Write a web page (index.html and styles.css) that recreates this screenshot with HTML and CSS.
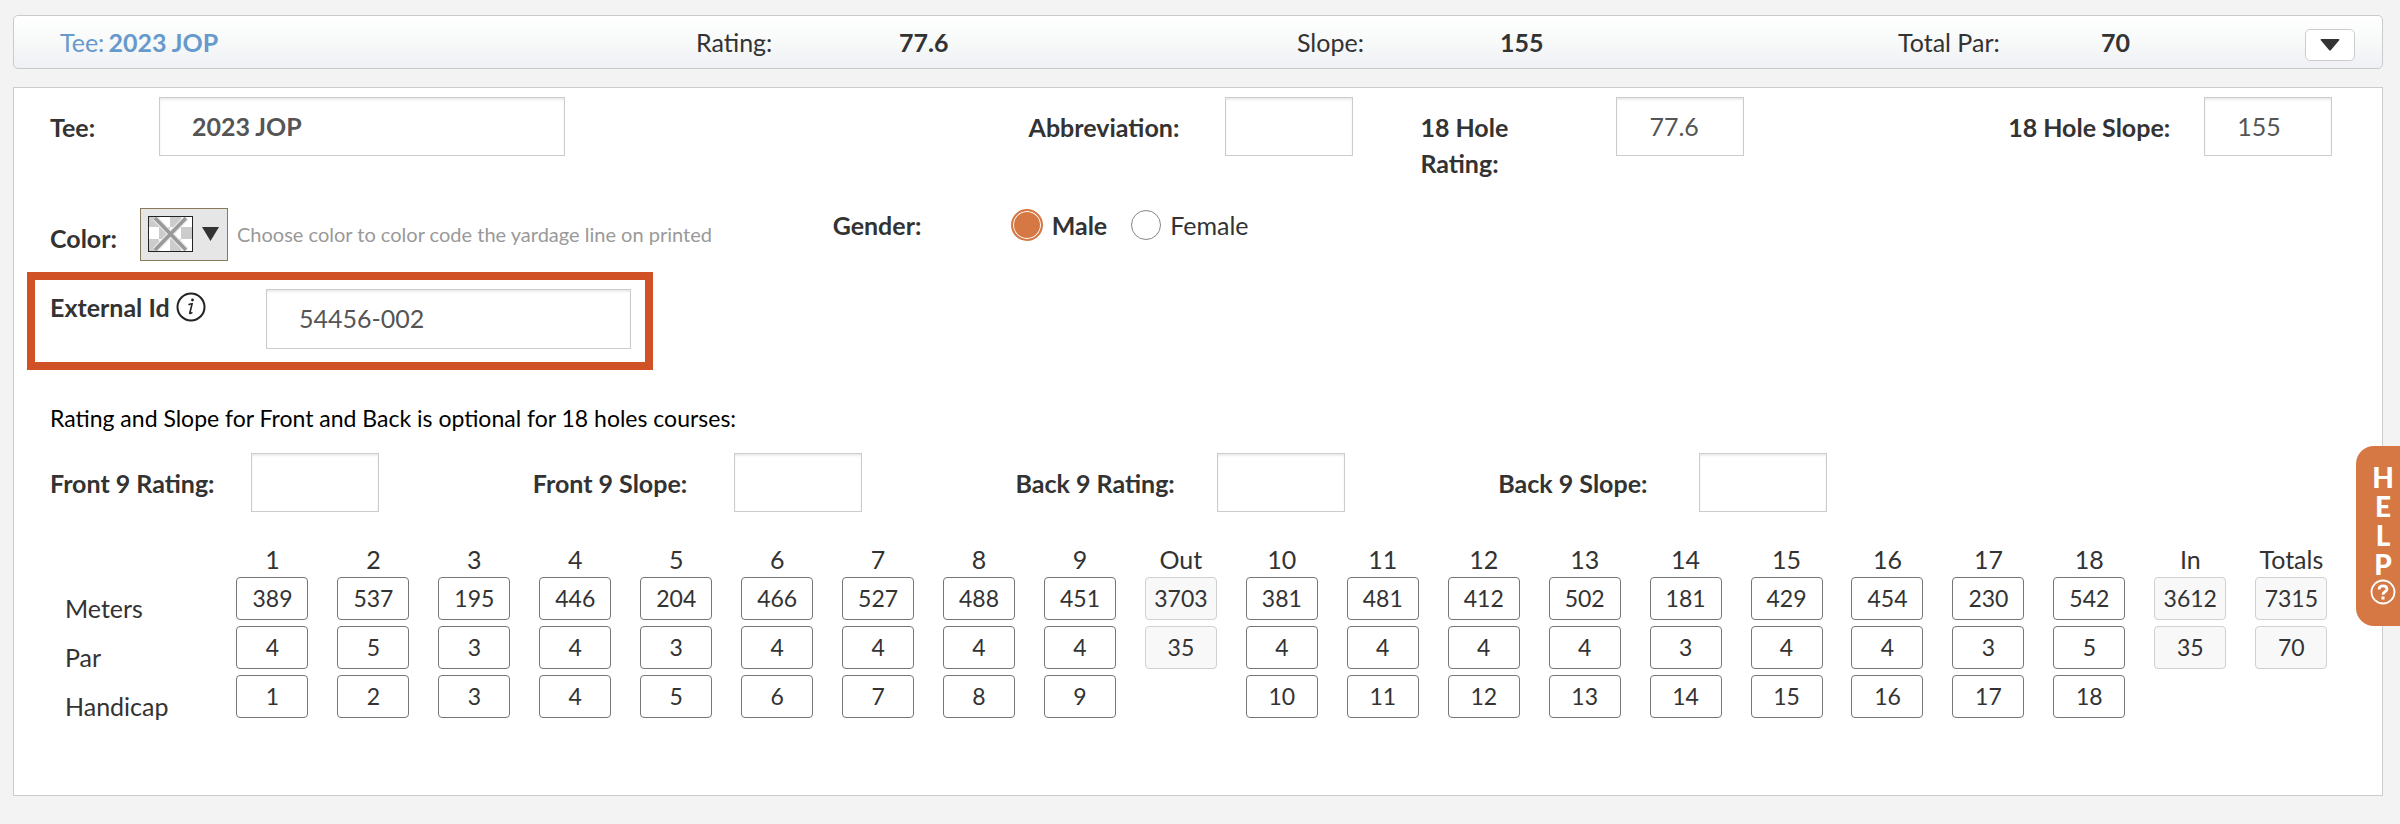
FILE: index.html
```html
<!DOCTYPE html>
<html lang="en">
<head>
    <meta charset="UTF-8">
    <meta name="viewport" content="width=device-width, initial-scale=1.0">
    <title>Tee: 2023 JOP</title>
    <link rel="stylesheet" href="styles.css">
</head>
<body>
    <div class="page">
        <div class="tee-bar">
            <a class="tee-name" href="#tee-panel"><span>Tee:</span><b>2023 JOP</b></a>
            <div class="stat"><span>Rating:</span><b>77.6</b></div>
            <div class="stat"><span>Slope:</span><b>155</b></div>
            <div class="stat"><span>Total Par:</span><b>70</b></div>
            <button class="toggle" type="button" aria-label="Collapse tee">
                <svg width="20" height="12" viewBox="0 0 20 12"><path d="M1.500 0h17q1.500 0 .700 1.300L11 11q-1 1.200-2 0L.800 1.300Q0 0 1.500 0z" fill="#333"/></svg>
            </button>
        </div>

        <form class="panel" id="tee-panel">
            <div class="row row-main">
                <div class="field">
                    <label class="label-tee" for="tee">Tee:</label>
                    <input class="text text-tee" type="text" id="tee" value="2023 JOP">
                </div>
                <div class="field">
                    <label for="abbr">Abbreviation:</label>
                    <input class="text" type="text" id="abbr">
                </div>
                <div class="field">
                    <label for="rating">18 Hole<br>Rating:</label>
                    <input class="text" type="text" id="rating" value="77.6">
                </div>
                <div class="field">
                    <label for="slope">18 Hole Slope:</label>
                    <input class="text" type="text" id="slope" value="155">
                </div>
            </div>

            <div class="row row-color">
                <div class="field">
                    <label class="label-color" for="color">Color:</label>
                    <button class="color-picker" type="button" id="color">
                        <svg width="45" height="36" viewBox="0 0 45 36">
                            <rect width="45" height="36" fill="#fff"/>
                            <path d="M1 1h10v10H1zM22 1h11v10H22zM11 11h11v12H11zM33 11h11v12H33zM1 23h10v12H1zM22 23h11v12H22z" fill="#ccc"/>
                            <path d="M7 2l31 32M38 2L7 34" stroke="#e8e8e8" stroke-width="6"/>
                            <path d="M7 2l31 32M38 2L7 34" stroke="#999" stroke-width="3.500"/>
                            <rect x=".5" y=".5" width="44" height="35" fill="none" stroke="#222"/>
                        </svg>
                        <svg width="17" height="14" viewBox="0 0 17 14"><path d="M0 0h17L8.500 14z" fill="#333"/></svg>
                    </button>
                    <span class="hint">Choose color to color code the yardage line on printed</span>
                </div>
                <div class="gender" role="radiogroup" aria-labelledby="gender-label">
                    <span class="gender-label" id="gender-label">Gender:</span>
                    <label><input type="radio" name="gender" value="m" checked><span>Male</span></label>
                    <label><input type="radio" name="gender" value="f"><span>Female</span></label>
                </div>
            </div>

            <div class="external">
                <label for="external">External Id
                    <svg width="30" height="30" viewBox="0 0 30 30">
                        <circle cx="15" cy="15" r="13.500" fill="none" stroke="#222" stroke-width="2"/>
                        <circle cx="16.500" cy="8" r="1.400" fill="#222"/>
                        <path d="M12.500 12.800q2-1 3.600-1l-2.300 9.200q-.2 1.200 2.600-.6" fill="none" stroke="#222" stroke-width="1.600"/>
                    </svg>
                </label>
                <input class="text" type="text" id="external" value="54456-002">
            </div>

            <p class="note">Rating and Slope for Front and Back is optional for 18 holes courses:</p>

            <div class="row row-nines">
                <div class="field">
                    <label for="f9r">Front 9 Rating:</label>
                    <input class="text" type="text" id="f9r">
                </div>
                <div class="field">
                    <label for="f9s">Front 9 Slope:</label>
                    <input class="text" type="text" id="f9s">
                </div>
                <div class="field">
                    <label for="b9r">Back 9 Rating:</label>
                    <input class="text" type="text" id="b9r">
                </div>
                <div class="field">
                    <label for="b9s">Back 9 Slope:</label>
                    <input class="text" type="text" id="b9s">
                </div>
            </div>

            <table class="card" id="card"></table>
        </form>
    </div>

    <button class="help" type="button">
        <span>H</span><span>E</span><span>L</span><span>P</span>
        <svg width="26" height="26" viewBox="0 0 26 26" fill="none" stroke="#fff">
            <circle cx="13" cy="13" r="11.500" stroke-width="1.800"/>
            <path d="M9 10.500q.3-3.600 4-3.600t4 3q0 1.700-2 2.800t-2 3" stroke-width="2.800"/>
            <path d="M13 17.500v3" stroke-width="3"/>
        </svg>
    </button>

    <script src="script.js"></script>
</body>
</html>
```
FILE: styles.css
```css
* {
    box-sizing: border-box;
}
body {
    margin: 0;
    background: #f3f3f3;
    color: #333;
    font-family: Lato, "Liberation Sans", sans-serif;
    font-size: 25px;
    line-height: 36px;
}
input, button {
    font: inherit;
    color: inherit;
}
svg {
    display: block;
}
.page {
    padding: 15px 17px 27px 13px;
}

/* summary bar */
.tee-bar {
    display: grid;
    grid-template-columns: 636fr 601fr 601fr 407fr 50px;
    align-items: center;
    height: 54px;
    padding: 0 27px 0 46px;
    border: 1px solid #c9cacc;
    border-radius: 5px;
    background: linear-gradient(#fff, #f8f9f9 50%, #eff0f4);
}
.tee-name {
    display: flex;
    gap: 4px;
    color: #6699cc;
    text-decoration: none;
}
.stat {
    display: flex;
}
.stat span {
    width: 203px;
}
.toggle {
    display: flex;
    align-items: center;
    justify-content: center;
    height: 32px;
    padding: 0;
    margin-top: 6px;
    border: 1px solid #ccc;
    border-radius: 5px;
    background: #fff;
    cursor: pointer;
}

/* form */
.panel {
    margin-top: 18px;
    padding: 9px 40px 71px 36px;
    border: 1px solid #ccc;
    background: #fff;
}
.row {
    display: grid;
}
.row-main {
    grid-template-columns: 979fr 392fr 588fr 334fr;
}
.row-color {
    grid-template-columns: 783fr 1510fr;
    margin-top: 27px;
}
.row-nines {
    grid-template-columns: 483fr 483fr 483fr 844fr;
    margin-top: 17px;
}
.field {
    display: flex;
    align-items: flex-start;
}
.field label {
    flex: none;
    width: 196px;
    padding-top: 12px;
    font-weight: bold;
}
.row-nines label {
    width: 201px;
}
.field .label-tee {
    width: 109px;
}
.field .label-color {
    width: 90px;
}
.text {
    width: 128px;
    height: 59px;
    padding: 0 32px 2px;
    border: 1px solid #ccc;
    border-radius: 0;
    background: #fff;
    box-shadow: inset 0 2px 2px rgba(0, 0, 0, 0.08);
    color: #555;
}
.text-tee {
    width: 406px;
    font-weight: bold;
}
.color-picker {
    display: flex;
    gap: 9px;
    width: 88px;
    height: 53px;
    padding: 7px;
    border: 1px solid #8a7a5c;
    background: #e6e6e6;
    cursor: pointer;
}
.color-picker svg + svg {
    margin-top: 11px;
}
.hint {
    padding: 8px 9px;
    color: #999;
    font-size: 20px;
}
.gender {
    display: flex;
    align-items: center;
    height: 34px;
}
.gender-label {
    width: 178px;
    font-weight: bold;
}
.gender label {
    display: flex;
    align-items: center;
    gap: 9px;
    margin-right: 24px;
}
.gender input {
    appearance: none;
    width: 30px;
    height: 30px;
    margin: 0;
    border: 1px solid #888;
    border-radius: 50%;
}
.gender input:checked {
    width: 32px;
    height: 32px;
    border: 2px solid #d67843;
    background: #d67843;
    box-shadow: inset 0 0 0 1px #fff;
}
.gender input:checked + span {
    font-weight: bold;
}
.external {
    display: flex;
    align-items: flex-start;
    width: 626px;
    margin: 11px 0 0 -23px;
    padding: 9px 14px 13px 15px;
    border: 8px solid #cf5125;
}
.external label {
    display: flex;
    align-items: center;
    gap: 6px;
    width: 216px;
    font-weight: bold;
}
.external .text {
    width: 365px;
    height: 60px;
}
.note {
    margin: 30px 0 0;
    color: #000;
    font-size: 23px;
}

/* scorecard */
.card {
    width: 100%;
    margin-top: 29px;
    border-collapse: collapse;
    table-layout: fixed;
}
.card th {
    padding: 0;
    font-weight: normal;
}
.card .row-label {
    width: 172px;
    padding-left: 15px;
    text-align: left;
    vertical-align: bottom;
}
.card td {
    height: 49px;
    padding: 0;
    text-align: center;
    vertical-align: top;
}
.card input {
    display: block;
    width: 72px;
    height: 43px;
    margin: 0 auto;
    padding: 0 0 2px;
    border: 1px solid #767676;
    border-radius: 4px;
    background: #fff;
    font-size: 23px;
    text-align: center;
}
.card input:disabled {
    border-color: #d0d0d0;
    background: #f8f8f8;
    color: #333;
}

/* help tab stays over the page edge */
.help {
    position: fixed;
    top: 446px;
    right: 0;
    display: flex;
    flex-direction: column;
    align-items: center;
    width: 44px;
    height: 180px;
    padding: 17px 0 0 10px;
    border: 0;
    border-radius: 18px 0 0 18px;
    background: #d67843;
    color: #fff;
    font-size: 28px;
    font-weight: 900;
    line-height: 29px;
    cursor: pointer;
}
```
FILE: script.js
```js
const meters = [389, 537, 195, 446, 204, 466, 527, 488, 451, 381, 481, 412, 502, 181, 429, 454, 230, 542];
const par = [4, 5, 3, 4, 3, 4, 4, 4, 4, 4, 4, 4, 4, 3, 4, 4, 3, 5];
const handicap = [1, 2, 3, 4, 5, 6, 7, 8, 9, 10, 11, 12, 13, 14, 15, 16, 17, 18];

function sum(list) {
    return list.reduce((a, b) => a + b, 0);
}

function cell(name, value, disabled) {
    return `<td><input type="text" aria-label="${name}" value="${value}"${disabled ? ' disabled' : ''}></td>`;
}

function buildRow(name, values, totals) {
    const cells = values.map((v, i) => cell(`${name} ${i + 1}`, v, false));
    const front = values.slice(0, 9);
    const back = values.slice(9);
    const out = totals ? cell(`${name} Out`, sum(front), true) : '<td></td>';
    const end = totals
        ? cell(`${name} In`, sum(back), true) + cell(`${name} Total`, sum(values), true)
        : '<td></td><td></td>';
    return `<tr><th class="row-label" scope="row">${name}</th>${cells.slice(0, 9).join('')}${out}${cells.slice(9).join('')}${end}</tr>`;
}

function buildHead() {
    const names = [1, 2, 3, 4, 5, 6, 7, 8, 9, 'Out', 10, 11, 12, 13, 14, 15, 16, 17, 18, 'In', 'Totals'];
    return `<tr><th class="row-label"></th>${names.map(n => `<th scope="col">${n}</th>`).join('')}</tr>`;
}

document.getElementById('card').innerHTML =
    `<thead>${buildHead()}</thead><tbody>` +
    buildRow('Meters', meters, true) +
    buildRow('Par', par, true) +
    buildRow('Handicap', handicap, false) +
    '</tbody>';
```
